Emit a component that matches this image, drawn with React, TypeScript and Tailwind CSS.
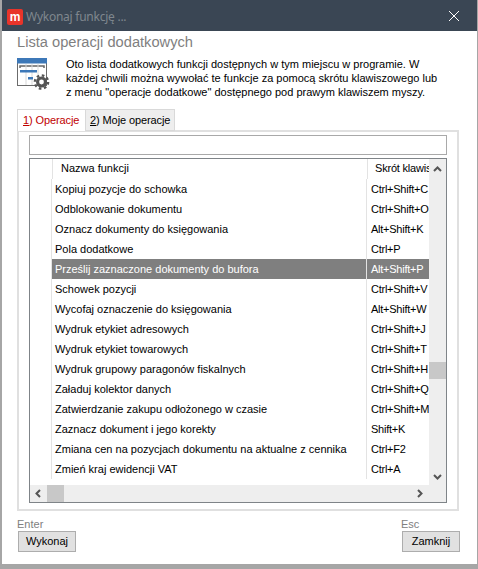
import React from 'react';

const rows = [
  ['Kopiuj pozycje do schowka', 'Ctrl+Shift+C'],
  ['Odblokowanie dokumentu', 'Ctrl+Shift+O'],
  ['Oznacz dokumenty do księgowania', 'Alt+Shift+K'],
  ['Pola dodatkowe', 'Ctrl+P'],
  ['Prześlij zaznaczone dokumenty do bufora', 'Alt+Shift+P'],
  ['Schowek pozycji', 'Ctrl+Shift+V'],
  ['Wycofaj oznaczenie do księgowania', 'Alt+Shift+W'],
  ['Wydruk etykiet adresowych', 'Ctrl+Shift+J'],
  ['Wydruk etykiet towarowych', 'Ctrl+Shift+T'],
  ['Wydruk grupowy paragonów fiskalnych', 'Ctrl+Shift+H'],
  ['Załaduj kolektor danych', 'Ctrl+Shift+Q'],
  ['Zatwierdzanie zakupu odłożonego w czasie', 'Ctrl+Shift+M'],
  ['Zaznacz dokument i jego korekty', 'Shift+K'],
  ['Zmiana cen na pozycjach dokumentu na aktualne z cennika', 'Ctrl+F2'],
  ['Zmień kraj ewidencji VAT', 'Ctrl+A'],
];

const Chevron = ({ d }: { d: string }) => (
  <svg width="9" height="9" viewBox="0 0 9 9" fill="none" stroke="#555" strokeWidth="2">
    <path d={d} />
  </svg>
);

const ListIcon = () => (
  <svg width="33" height="33" viewBox="0 0 33 33" className="shrink-0">
    <rect x="0.5" y="1.5" width="29" height="27" fill="#fff" stroke="#6b6b6b" />
    <rect x="0" y="1" width="30" height="5.5" fill="#3d78b8" />
    <path d="M3 11V9H27V11" fill="none" stroke="#666" strokeWidth="1.5" />
    <path d="M9 7V28M15 7V28M21 7V28" stroke="#d9d9d9" />
    <rect x="3" y="13" width="17" height="2.5" fill="#3d78b8" />
    <rect x="11" y="20" width="5" height="2.5" fill="#3d78b8" />
    <circle cx="24.5" cy="25" r="5.5" fill="#555" />
    <circle cx="24.5" cy="25" r="6.6" fill="none" stroke="#555" strokeWidth="2.4" strokeDasharray="2.6 2.6" />
    <circle cx="24.5" cy="25" r="2.4" fill="#fff" />
  </svg>
);

export default function App() {
  return (
    <div className="w-[478px] h-[569px] flex flex-col bg-white border-l-2 border-r border-b-[5px] border-[#a6a6a6] font-['Liberation_Sans',sans-serif] text-[11px] text-black overflow-hidden">
      <div className="h-[31px] -ml-[2px] -mr-[1px] shrink-0 bg-[#3a4654] flex items-center pl-[7px] pr-[19px]">
        <div className="w-[16px] h-[16px] rounded-[2px] bg-[#e8342a] flex items-center justify-center text-white text-[12px] font-bold leading-none pb-[1px] mt-[3px]">m</div>
        <span className="ml-[3px] text-[#7f868e] text-[12px] font-['Noto_Sans',sans-serif] mt-[3px] tracking-[-0.25px]">Wykonaj funkcję ...</span>
        <svg className="ml-auto" width="10" height="10" viewBox="0 0 10 10" stroke="#fff" strokeWidth="1">
          <path d="M0 0L10 10M10 0L0 10" />
        </svg>
      </div>

      <div className="flex-1 flex flex-col pl-[15px] pr-[17px] min-h-0">
        <div className="text-[14.67px] leading-[20px] text-[#7f7f7f] mt-[1px]">Lista operacji dodatkowych</div>
        <div className="flex mt-[5px] h-[52px]">
          <ListIcon />
          <p className="ml-[16px] leading-[14px] whitespace-nowrap">
            Oto lista dodatkowych funkcji dostępnych w tym miejscu w programie. W<br />
            każdej chwili można wywołać te funkcje za pomocą skrótu klawiszowego lub<br />
            z menu "operacje dodatkowe" dostępnego pod prawym klawiszem myszy.
          </p>
        </div>

        <div className="flex h-[22px] mr-[1px] relative z-10 shrink-0 whitespace-nowrap tracking-[-0.1px]">
          <div className="w-[69px] border border-b-0 border-[#d9d9d9] bg-white text-[#c00000] pl-[5px] leading-[21px]">
            <span className="underline">1</span>) Operacje
          </div>
          <div className="w-[89px] border border-l-0 border-[#d9d9d9] bg-[#eeeeee] pl-[4px] leading-[21px]">
            <span className="underline">2</span>) Moje operacje
          </div>
        </div>

        <div className="h-[381px] -mt-[1px] border-2 border-[#e0e0e0] px-[10px] pt-[3px] shrink-0 mr-[1px]">
          <div className="h-[20px] border border-[#a9a9a9] bg-white" />
          <div className="mt-[3px] h-[345px] border border-[#7f8488] flex flex-col overflow-hidden">
            <div className="flex-1 flex min-h-0">
              <div className="flex-1 min-w-0 flex flex-col">
                <div className="h-[20px] flex shrink-0">
                  <div className="w-[23px] border-r border-[#e3e3e3]" />
                  <div className="w-[315px] pl-[8px] leading-[19px] border-r border-[#e3e3e3]">Nazwa funkcji</div>
                  <div className="flex-1 min-w-0 pl-[7px] leading-[19px] overflow-hidden whitespace-nowrap tracking-[-0.2px]">Skrót klawiszowy</div>
                </div>
                <div className="flex-1">
                  {rows.map(([name, key]) => {
                    const selected = name.startsWith('Prześlij');
                    return (
                      <div key={name} className="h-[20px] flex leading-[20px]">
                        <div className="w-[22px] border-r border-[#e3e3e3]" />
                        <div className={`flex-1 flex min-w-0 ${selected ? 'bg-[#7f7f7f] text-white' : ''}`}>
                          <div className="w-[315px] pl-[3px] border-r border-[#e3e3e3] whitespace-nowrap">{name}</div>
                          <div className="flex-1 min-w-0 pl-[4px] whitespace-nowrap tracking-[-0.25px]">{key}</div>
                        </div>
                      </div>
                    );
                  })}
                </div>
              </div>
              <div className="w-[17px] shrink-0 bg-[#eeeeee] flex flex-col items-center">
                <div className="h-[20px] flex items-center justify-center"><Chevron d="M1 6L4.5 2.5L8 6" /></div>
                <div className="w-full h-[17px] bg-[#c8c8c8] mt-[183px]" />
                <div className="mt-auto h-[18px] flex items-center justify-center"><Chevron d="M1 3L4.5 6.5L8 3" /></div>
              </div>
            </div>
            <div className="h-[17px] shrink-0 bg-[#eeeeee] flex items-center">
              <div className="w-[17px] flex justify-center"><Chevron d="M6 1L2.5 4.5L6 8" /></div>
              <div className="w-[17px] h-full bg-[#c8c8c8]" />
              <div className="ml-auto mr-[22px] flex"><Chevron d="M3 1L6.5 4.5L3 8" /></div>
            </div>
          </div>
        </div>

        <div className="flex justify-between pl-[1px] mt-[6px]">
          <div>
            <div className="text-[#808080] leading-[14px] -ml-[1px]">Enter</div>
            <button className="w-[58px] h-[21px] bg-[#e1e1e1] border border-[#adadad] text-[11px] leading-none">Wykonaj</button>
          </div>
          <div>
            <div className="text-[#808080] leading-[14px] -ml-[1px]">Esc</div>
            <button className="w-[58px] h-[21px] bg-[#e1e1e1] border border-[#adadad] text-[11px] leading-none">Zamknij</button>
          </div>
        </div>
      </div>
    </div>
  );
}
